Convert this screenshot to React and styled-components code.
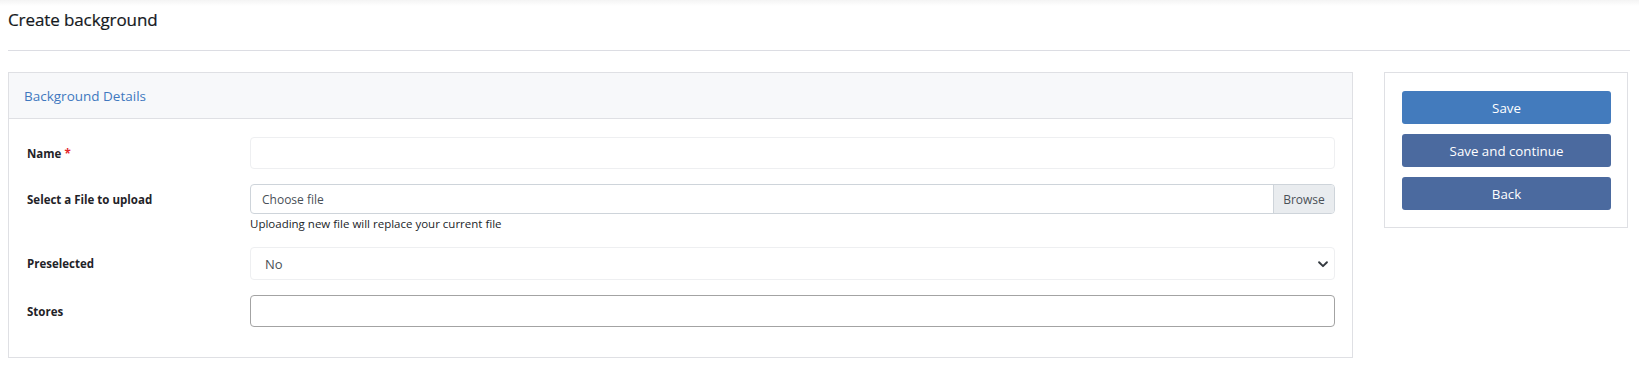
import React from "react";
import styled, { createGlobalStyle } from "styled-components";

const GlobalStyle = createGlobalStyle`
  body {
    margin: 0;
    background: #ffffff;
    font-family: "Open Sans", "Noto Sans", Arial, sans-serif;
    color: #212529;
  }
`;

const Page = styled.div`
  width: 1639px;
  height: 368px;
  overflow: hidden;
  background: linear-gradient(#f4f4f4 0px, #ffffff 6px);
`;

const TitleBar = styled.div`
  height: 50px;
  margin: 0 9px 0 8px;
  border-bottom: 1px solid #dcdde3;
  display: flex;
  align-items: flex-start;
`;

const PageTitle = styled.h1`
  margin: 8px 0 0;
  font-size: 17px;
  font-weight: 400;
  color: #15191d;
  letter-spacing: -0.1px;
  -webkit-text-stroke: 0.2px #15191d;
`;

const Content = styled.div`
  display: flex;
  align-items: flex-start;
  gap: 31px;
  padding: 21px 11px 0 8px;
`;

const Panel = styled.section`
  width: 1345px;
  box-sizing: border-box;
  border: 1px solid #dfe0e4;
`;

const PanelHeader = styled.div`
  height: 46px;
  box-sizing: border-box;
  background: #f7f8fa;
  border-bottom: 1px solid #dfe0e4;
  display: flex;
  align-items: center;
  padding-left: 15px;
  font-size: 13.5px;
  color: #3f78bf;
`;

const PanelBody = styled.div`
  padding: 18px 17px 30px 18px;
  display: flex;
  flex-direction: column;
  gap: 15px;
`;

const Row = styled.div`
  display: grid;
  grid-template-columns: 223px 1fr;
  align-items: start;
`;

const Label = styled.label`
  font-size: 11.5px;
  font-weight: 700;
  color: #1f2328;
  height: ${(p) => p.$h}px;
  display: flex;
  align-items: center;
`;

const Required = styled.span`
  color: #e3262b;
  margin-left: 3px;
`;

const TextInput = styled.div`
  height: ${(p) => p.$h}px;
  box-sizing: border-box;
  border: 1px solid ${(p) => (p.$dark ? "#a3a3a3" : "#eeeff1")};
  border-radius: 4px;
  background: #fff;
`;

const FileBox = styled.div`
  height: 30px;
  box-sizing: border-box;
  border: 1px solid #ced4da;
  border-radius: 4px;
  display: flex;
  overflow: hidden;
`;

const FileText = styled.div`
  flex: 1;
  display: flex;
  align-items: center;
  padding-left: 11px;
  font-size: 12px;
  color: #495057;
`;

const BrowseButton = styled.div`
  width: 60px;
  background: #e9ecef;
  border-left: 1px solid #ced4da;
  display: flex;
  align-items: center;
  justify-content: center;
  font-size: 12px;
  color: #495057;
`;

const Help = styled.div`
  font-size: 11.5px;
  line-height: 16px;
  color: #212529;
  margin-top: 2px;
`;

const SelectBox = styled.div`
  height: 33px;
  box-sizing: border-box;
  border: 1px solid #eeeff1;
  border-radius: 4px;
  display: flex;
  align-items: center;
  justify-content: space-between;
  padding: 0 4px 0 14px;
  font-size: 13px;
  color: #495057;
`;

const Side = styled.aside`
  width: 244px;
  box-sizing: border-box;
  border: 1px solid #dfe0e4;
  padding: 18px 16px 17px 17px;
  display: flex;
  flex-direction: column;
  gap: 10px;
`;

const ActionButton = styled.button`
  height: 33px;
  border: none;
  border-radius: 3px;
  background: ${(p) => (p.$primary ? "#437bbd" : "#4b6a9f")};
  color: #ffffff;
  font-family: inherit;
  font-size: 13.3px;
  cursor: pointer;
`;

export default function App() {
  return (
    <Page>
      <GlobalStyle />
      <TitleBar>
        <PageTitle>Create background</PageTitle>
      </TitleBar>
      <Content>
        <Panel>
          <PanelHeader>Background Details</PanelHeader>
          <PanelBody>
            <Row>
              <Label $h={32}>
                Name<Required>*</Required>
              </Label>
              <TextInput $h={32} />
            </Row>
            <Row>
              <Label $h={30}>Select a File to upload</Label>
              <div>
                <FileBox>
                  <FileText>Choose file</FileText>
                  <BrowseButton>Browse</BrowseButton>
                </FileBox>
                <Help>Uploading new file will replace your current file</Help>
              </div>
            </Row>
            <Row>
              <Label $h={33}>Preselected</Label>
              <SelectBox>
                No
                <svg width="14" height="14" viewBox="0 0 16 16">
                  <path
                    d="M3.5 6l4.5 4.5 4.5-4.5"
                    fill="none"
                    stroke="#343a40"
                    strokeWidth="2.2"
                    strokeLinecap="round"
                    strokeLinejoin="round"
                  />
                </svg>
              </SelectBox>
            </Row>
            <Row>
              <Label $h={32}>Stores</Label>
              <TextInput $h={32} $dark />
            </Row>
          </PanelBody>
        </Panel>
        <Side>
          <ActionButton $primary>Save</ActionButton>
          <ActionButton>Save and continue</ActionButton>
          <ActionButton>Back</ActionButton>
        </Side>
      </Content>
    </Page>
  );
}
